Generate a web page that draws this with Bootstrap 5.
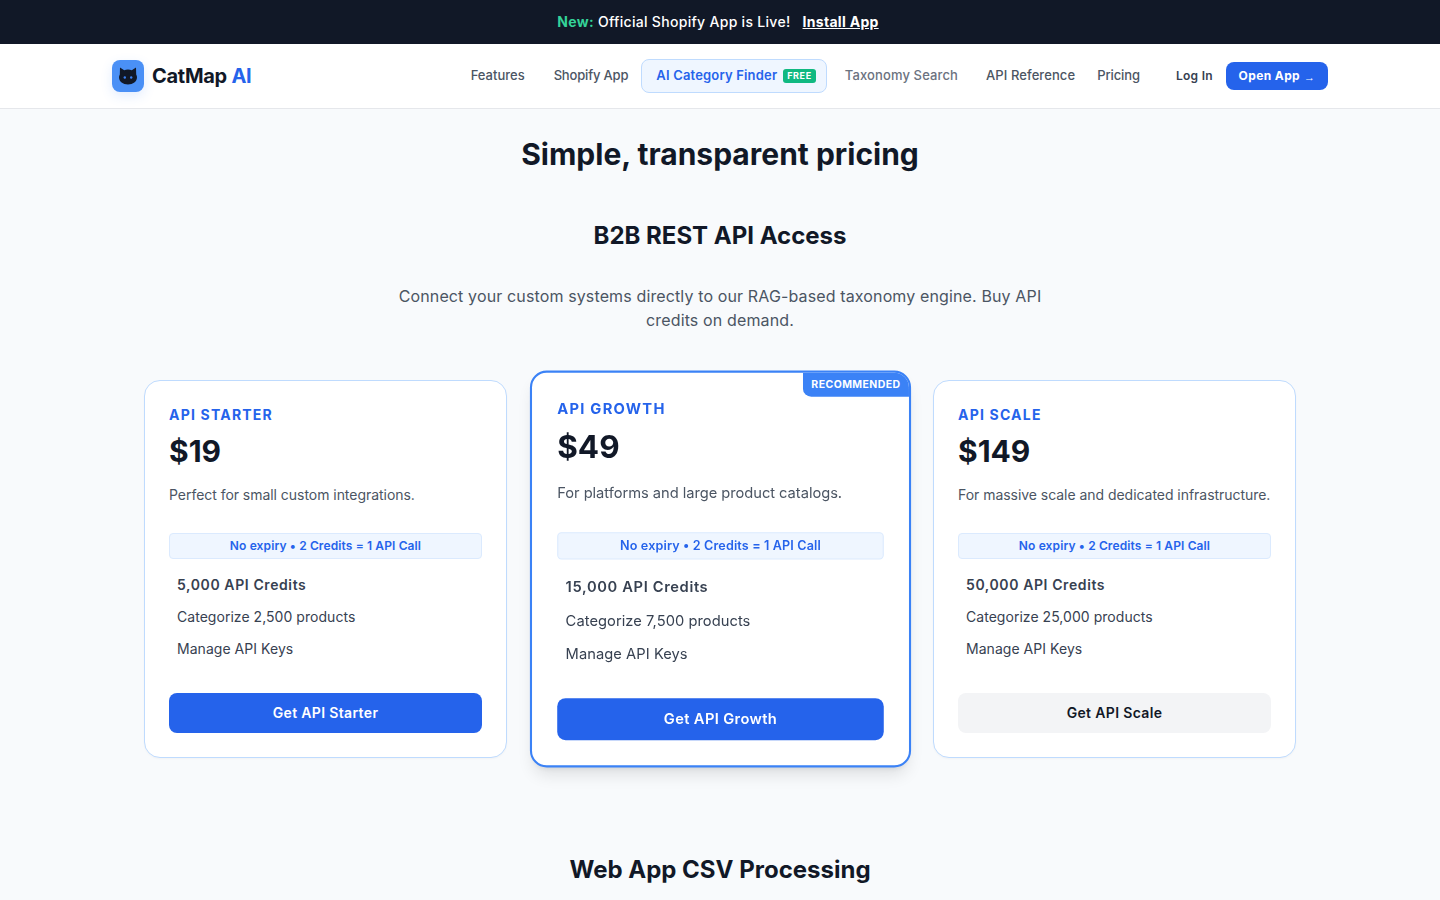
<!doctype html>
<html lang="en">
<head>
<meta charset="utf-8">
<title>CatMap AI Pricing</title>
<link href="https://cdn.jsdelivr.net/npm/bootstrap@5.3.0/dist/css/bootstrap.min.css" rel="stylesheet">
<style>
body{font-family:Inter,"Liberation Sans",sans-serif;background:#f8fafc;color:#111827;}
a{text-decoration:none;}
.promo{height:44px;background:#111827;color:#fff;font-size:14px;font-weight:500;letter-spacing:.3px;padding:0 4px 1px 0;}
.promo b{color:#34d399;font-weight:700;}
.promo a{color:#fff;font-weight:700;text-decoration:underline;margin-left:12px;}
.topnav{height:65px;background:#fff;border-bottom:1px solid #e5e7eb;}
.navwrap{max-width:1280px;padding:0 32px;}
.logo-box{width:32px;height:32px;border-radius:8px;background:#4a90f6;box-shadow:0 4px 12px rgba(59,130,246,.15);}
.logo-name{font-size:20px;font-weight:700;color:#111827;letter-spacing:-.28px;}
.logo-name span{color:#2563eb;}
.lnk{font-size:13px;font-weight:500;color:#4b5563;white-space:nowrap;}
.lnk-shop{letter-spacing:-.17px;}
.lnk-dim{color:#6b7280;letter-spacing:.13px;}
.lnk-api{letter-spacing:.08px;}
.lnk-price{letter-spacing:-.1px;}
.lnk-pill{height:34px;padding:0 10px 0 14px;border:1px solid #bfdbfe;border-radius:8px;background:#eff6ff;color:#2563eb;font-weight:600;letter-spacing:.17px;}
.free{background:#10b981;color:#fff;font-size:9px;font-weight:700;letter-spacing:.6px;border-radius:3px;padding:0 4px;height:14px;line-height:14px;margin-left:6px;}
.m-shop{margin-left:29px}.m-pill{margin-left:13px}.m-tax{margin-left:18px}.m-api{margin-left:28px}.m-price{margin-left:22px}
.login{font-size:12px;font-weight:600;color:#374151;margin-left:36px;letter-spacing:.3px;}
.openbtn{height:28px;width:102px;margin-left:13px;background:#2563eb;color:#fff;border-radius:8px;font-size:12px;font-weight:700;letter-spacing:.4px;}
.openbtn small{font-family:"Liberation Sans",sans-serif;font-size:11px;font-weight:400;margin-left:4px;padding-top:2px;}
.wrap-price{max-width:1152px;}
.h-main{font-size:30px;font-weight:700;line-height:40px;margin:25px 0 0;}
.h-sub{font-size:24px;font-weight:700;line-height:32px;margin:0;}
.b2b{margin-top:46px;}
.intro{max-width:672px;font-size:16px;line-height:24px;color:#4b5563;margin:32px auto 48px;letter-spacing:.13px;}
.tiers{display:grid;grid-template-columns:repeat(3,363px);justify-content:space-between;}
.tier{background:#fff;border:1px solid #bfdbfe;border-radius:16px;padding:24px;position:relative;box-shadow:0 1px 2px rgba(0,0,0,.03);}
.tier-hi{border:2px solid #3b82f6;transform:scale(1.05);box-shadow:0 10px 15px -3px rgba(0,0,0,.1),0 4px 6px -4px rgba(0,0,0,.1);overflow:hidden;z-index:1;}
.ribbon{position:absolute;top:0;right:0;background:#3b82f6;color:#fff;font-size:10px;font-weight:700;letter-spacing:.4px;line-height:15px;padding:4px 8px;border-bottom-left-radius:8px;}
.t-name{font-size:14px;font-weight:700;color:#2563eb;letter-spacing:1.2px;line-height:20px;}
.t-price{font-size:30px;font-weight:700;line-height:40px;margin-top:6px;color:#111827;}
.t-desc{font-size:14px;line-height:20px;color:#4b5563;margin:14px 0 28px;white-space:nowrap;letter-spacing:-.04px;}
.t-note{height:26px;line-height:24px;font-size:12px;font-weight:600;color:#2563eb;background:#eff6ff;border:1px solid #dbeafe;border-radius:4px;text-align:center;letter-spacing:.12px;}
.t-list{list-style:none;margin:10px 0 28px;padding:0 0 0 8px;font-size:14px;color:#374151;letter-spacing:.04px;}
.tier-hi .t-list{margin-bottom:26px;}
.t-list li{height:32px;line-height:32px;}
.t-list li:first-child{font-weight:600;letter-spacing:.6px;}
.t-btn{display:block;height:40px;line-height:40px;padding:0;border:0;border-radius:8px;font-size:14px;font-weight:600;width:100%;letter-spacing:.34px;}
.t-btn-blue{background:#2563eb;color:#fff;}
.t-btn-gray{background:#f3f4f6;color:#111827;}
.csv{margin-top:96px;padding-bottom:40px;}
</style>
</head>
<body>
<div class="promo d-flex align-items-center justify-content-center"><span><b>New:</b> Official Shopify App is Live!</span><a href="#">Install App</a></div>
<nav class="topnav">
  <div class="navwrap mx-auto h-100 d-flex align-items-center justify-content-between">
    <a href="#" class="d-flex align-items-center gap-2">
      <span class="logo-box d-flex align-items-center justify-content-center">
        <svg width="20" height="20" viewBox="0 0 20 20" aria-hidden="true"><path d="M2 1.500 6.200 4.200C7.300 3.800 8.600 3.600 10 3.600s2.700.2 3.800.6L18 1.500 18.200 8.500C18.800 9.600 19 10.500 19 11.300 19 15.800 15 18.500 10 18.500S1 15.800 1 11.300C1 10.500 1.200 9.600 1.800 8.500Z" fill="#111827"/><circle cx="6.800" cy="11.500" r="1.200" fill="#3b82f6"/><circle cx="13.200" cy="11.500" r="1.200" fill="#3b82f6"/></svg>
      </span>
      <span class="logo-name ms-0">CatMap <span>AI</span></span>
    </a>
    <div class="d-flex align-items-center">
      <a class="lnk" href="#">Features</a>
      <a class="lnk lnk-shop m-shop" href="#">Shopify App</a>
      <a class="lnk lnk-pill m-pill d-flex align-items-center" href="#">AI Category Finder<span class="free">FREE</span></a>
      <a class="lnk lnk-dim m-tax" href="#">Taxonomy Search</a>
      <a class="lnk lnk-api m-api" href="#">API Reference</a>
      <a class="lnk lnk-price m-price" href="#">Pricing</a>
      <a class="login" href="#">Log In</a>
      <a class="openbtn d-flex align-items-center justify-content-center" href="#">Open App <small>→</small></a>
    </div>
  </div>
</nav>
<main class="wrap-price mx-auto text-center">
  <h1 class="h-main">Simple, transparent pricing</h1>
  <h2 class="h-sub b2b">B2B REST API Access</h2>
  <p class="intro">Connect your custom systems directly to our RAG-based taxonomy engine. Buy API credits on demand.</p>
  <div class="tiers text-start">
    <div class="tier">
      <div class="t-name">API STARTER</div>
      <div class="t-price">$19</div>
      <p class="t-desc">Perfect for small custom integrations.</p>
      <div class="t-note">No expiry • 2 Credits = 1 API Call</div>
      <ul class="t-list"><li>5,000 API Credits</li><li>Categorize 2,500 products</li><li>Manage API Keys</li></ul>
      <a class="t-btn t-btn-blue text-center" href="#">Get API Starter</a>
    </div>
    <div class="tier tier-hi">
      <div class="ribbon">RECOMMENDED</div>
      <div class="t-name">API GROWTH</div>
      <div class="t-price">$49</div>
      <p class="t-desc">For platforms and large product catalogs.</p>
      <div class="t-note">No expiry • 2 Credits = 1 API Call</div>
      <ul class="t-list"><li>15,000 API Credits</li><li>Categorize 7,500 products</li><li>Manage API Keys</li></ul>
      <a class="t-btn t-btn-blue text-center" href="#">Get API Growth</a>
    </div>
    <div class="tier">
      <div class="t-name">API SCALE</div>
      <div class="t-price">$149</div>
      <p class="t-desc">For massive scale and dedicated infrastructure.</p>
      <div class="t-note">No expiry • 2 Credits = 1 API Call</div>
      <ul class="t-list"><li>50,000 API Credits</li><li>Categorize 25,000 products</li><li>Manage API Keys</li></ul>
      <a class="t-btn t-btn-gray text-center" href="#">Get API Scale</a>
    </div>
  </div>
  <h2 class="h-sub csv">Web App CSV Processing</h2>
</main>
<script src="https://cdn.jsdelivr.net/npm/bootstrap@5.3.0/dist/js/bootstrap.bundle.min.js"></script>
</body>
</html>
